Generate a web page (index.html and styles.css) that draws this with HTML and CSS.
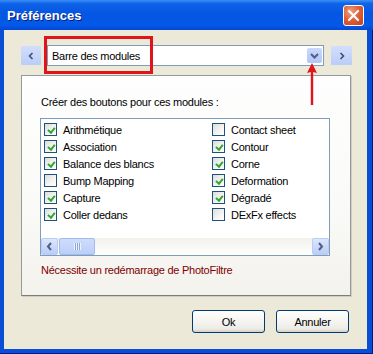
FILE: index.html
```html
<!DOCTYPE html>
<html lang="fr">
<head>
<meta charset="utf-8">
<title>Préférences</title>
<link rel="stylesheet" href="styles.css">
</head>
<body>
<div class="window">
  <div class="titlebar">
    <span class="title">Préférences</span>
    <span class="close">
      <svg width="13" height="13" viewBox="0 0 13 13"><path d="M2 2 L11 11 M11 2 L2 11" stroke="#fff" stroke-width="2.2" stroke-linecap="round"/></svg>
    </span>
  </div>
  <div class="content">
    <div class="navrow">
      <span class="navbtn">
        <svg width="6" height="8" viewBox="0 0 6 8"><path d="M4.5 1 L1.5 4 L4.5 7" fill="none" stroke="#3A4E7A" stroke-width="1.6"/></svg>
      </span>
      <div class="combo">
        <span class="combo-text">Barre des modules</span>
        <span class="dropbtn">
          <svg width="9" height="6" viewBox="0 0 9 6"><path d="M1 1 L4.5 4.5 L8 1" fill="none" stroke="#4D6185" stroke-width="2"/></svg>
        </span>
      </div>
      <span class="navbtn navbtn-right">
        <svg width="6" height="8" viewBox="0 0 6 8"><path d="M1.5 1 L4.5 4 L1.5 7" fill="none" stroke="#3A4E7A" stroke-width="1.6"/></svg>
      </span>
    </div>

    <div class="panel">
      <div class="label">Créer des boutons pour ces modules :</div>
      <div class="listbox">
        <div class="items">
          <label class="item"><span class="cb on"></span>Arithmétique</label>
          <label class="item"><span class="cb"></span>Contact sheet</label>
          <label class="item"><span class="cb on"></span>Association</label>
          <label class="item"><span class="cb on"></span>Contour</label>
          <label class="item"><span class="cb on"></span>Balance des blancs</label>
          <label class="item"><span class="cb on"></span>Corne</label>
          <label class="item"><span class="cb"></span>Bump Mapping</label>
          <label class="item"><span class="cb on"></span>Deformation</label>
          <label class="item"><span class="cb on"></span>Capture</label>
          <label class="item"><span class="cb on"></span>Dégradé</label>
          <label class="item"><span class="cb on"></span>Coller dedans</label>
          <label class="item"><span class="cb"></span>DExFx effects</label>
        </div>
        <div class="hscroll">
          <span class="sbtn">
            <svg width="7" height="9" viewBox="0 0 7 9"><path d="M5 1 L2 4.5 L5 8" fill="none" stroke="#4D6185" stroke-width="2"/></svg>
          </span>
          <span class="thumb"><span class="grip"></span></span>
          <span class="track"></span>
          <span class="sbtn">
            <svg width="7" height="9" viewBox="0 0 7 9"><path d="M2 1 L5 4.5 L2 8" fill="none" stroke="#4D6185" stroke-width="2"/></svg>
          </span>
        </div>
      </div>
      <div class="note">Nécessite un redémarrage de PhotoFiltre</div>
    </div>

    <div class="buttons">
      <button class="btn">Ok</button>
      <button class="btn">Annuler</button>
    </div>

    <div class="redbox"></div>
    <svg class="redarrow" width="12" height="42" viewBox="0 0 12 42">
      <path d="M6 0 L11 10 L7.2 9 L7.2 42 L4.8 42 L4.8 9 L1 10 Z" fill="#E0141B"/>
    </svg>
  </div>
</div>
</body>
</html>
```

FILE: styles.css
```css
* { box-sizing: border-box; }

html, body {
  margin: 0;
  padding: 0;
  background: #0A4ED6;
}

.window {
  width: 373px;
  height: 354px;
  display: flex;
  flex-direction: column;
  font-family: "Liberation Sans", Arial, sans-serif;
  font-size: 11px;
  letter-spacing: -0.25px;
  color: #000;
  background: #0A4ED6;
  box-shadow: inset 0 -1px 0 #001C8A, inset -1px 0 0 #001C8A;
}

.titlebar {
  height: 30px;
  flex: none;
  display: flex;
  align-items: center;
  justify-content: space-between;
  padding: 0 9px 0 7px;
  background: linear-gradient(to bottom, #3C8FF7 0%, #0E63E8 12%, #0556E2 45%, #0459E8 85%, #0346D4 100%);
}

.title {
  color: #fff;
  font-weight: bold;
  font-size: 13px;
  letter-spacing: 0;
  text-shadow: 1px 1px 0 #0A1E7A;
  margin-top: 1px;
}

.close {
  width: 21px;
  height: 21px;
  border: 1px solid #fff;
  border-radius: 3px;
  background: radial-gradient(circle at 35% 30%, #F0A084 0%, #E0613A 45%, #C2401C 100%);
  display: flex;
  align-items: center;
  justify-content: center;
  margin-top: 1px;
}

.content {
  position: relative;
  flex: 1;
  background: #ECE9D8;
  margin: 0 6px 5px 4px;
  padding: 15px 0 0 17px;
  display: flex;
  flex-direction: column;
}

.navrow {
  display: flex;
  align-items: center;
  height: 21px;
}

.navbtn {
  width: 20px;
  height: 19px;
  background: linear-gradient(to bottom, #D3DEFB, #BACDF8);
  display: flex;
  align-items: center;
  justify-content: center;
  border-radius: 1px;
}

.navbtn-right {
  width: 21px;
  margin-left: 7px;
}

.combo {
  margin-left: 6px;
  width: 277px;
  height: 21px;
  border: 1px solid #7F9DB9;
  background: #fff;
  display: flex;
  align-items: center;
  justify-content: space-between;
  padding: 0 1px 0 4px;
}

.dropbtn {
  width: 15px;
  height: 15px;
  background: linear-gradient(to bottom, #C9D8FC, #B1C7F6);
  border-radius: 2px;
  display: flex;
  align-items: center;
  justify-content: center;
}

.panel {
  margin-top: 9px;
  width: 330px;
  height: 221px;
  border: 1px solid #919B9C;
  border-bottom-color: #7A7E7F;
  box-shadow: 1px 1px 0 #D0CEC2;
  background: linear-gradient(to bottom, #FEFEFE 0%, #FAFAF8 60%, #F3F2ED 100%);
  padding: 20px 0 0 18px;
}

.label {
  height: 13px;
  line-height: 13px;
  padding-left: 1px;
}

.listbox {
  margin-top: 9px;
  width: 290px;
  height: 138px;
  border: 1px solid #7F9DB9;
  background: #fff;
  display: flex;
  flex-direction: column;
}

.items {
  flex: 1;
  display: grid;
  grid-template-columns: 168px 1fr;
  grid-auto-rows: 17px;
  padding: 2px 0 0 3px;
}

.item {
  display: flex;
  align-items: center;
  gap: 6px;
  white-space: nowrap;
}

.cb {
  width: 13px;
  height: 13px;
  flex: none;
  border: 1px solid #1C5180;
  background: linear-gradient(135deg, #DCDCD7 0%, #F5F5F2 60%, #FFFFFF 100%);
  position: relative;
}

.cb.on::after {
  content: "";
  position: absolute;
  left: 3.5px;
  top: 1.5px;
  width: 2.5px;
  height: 5px;
  border-right: 2px solid #31A631;
  border-bottom: 2px solid #31A631;
  transform: rotate(40deg);
  transform-origin: 50% 50%;
}

.hscroll {
  height: 17px;
  display: flex;
  background: linear-gradient(to bottom, #F3F1EC, #FEFEFB);
}

.sbtn {
  width: 17px;
  height: 17px;
  flex: none;
  background: linear-gradient(to bottom, #DCE6FD, #BBCDF6);
  border: 1px solid #B9CCF5;
  border-radius: 2px;
  display: flex;
  align-items: center;
  justify-content: center;
}

.thumb {
  margin-left: 1px;
  width: 36px;
  height: 17px;
  flex: none;
  background: linear-gradient(to bottom, #CEDCFD, #BCCFF8);
  border: 1px solid #A3BAEC;
  border-radius: 2px;
  display: flex;
  align-items: center;
  justify-content: center;
}

.grip {
  width: 7px;
  height: 7px;
  background: repeating-linear-gradient(to right, #EEF3FE 0 1px, #8CA6DC 1px 2px);
}

.track {
  flex: 1;
}

.note {
  margin-top: 8px;
  height: 13px;
  line-height: 13px;
  padding-left: 1px;
  color: #800000;
}

.buttons {
  margin-top: 14px;
  display: flex;
  justify-content: flex-end;
  gap: 11px;
  padding-right: 18px;
}

.btn {
  width: 73px;
  height: 23px;
  font-family: "Liberation Sans", Arial, sans-serif;
  font-size: 11px;
  letter-spacing: -0.25px;
  color: #000;
  border: 1px solid #003C74;
  border-radius: 3px;
  background: linear-gradient(to bottom, #FFFFFF 0%, #F5F4F0 50%, #ECEBE6 85%, #D6D0C5 100%);
  padding: 0;
}

.redbox {
  position: absolute;
  left: 40px;
  top: 6px;
  width: 109px;
  height: 38px;
  border: 3px solid #E0141B;
}

.redarrow {
  position: absolute;
  left: 302px;
  top: 33px;
}
```
